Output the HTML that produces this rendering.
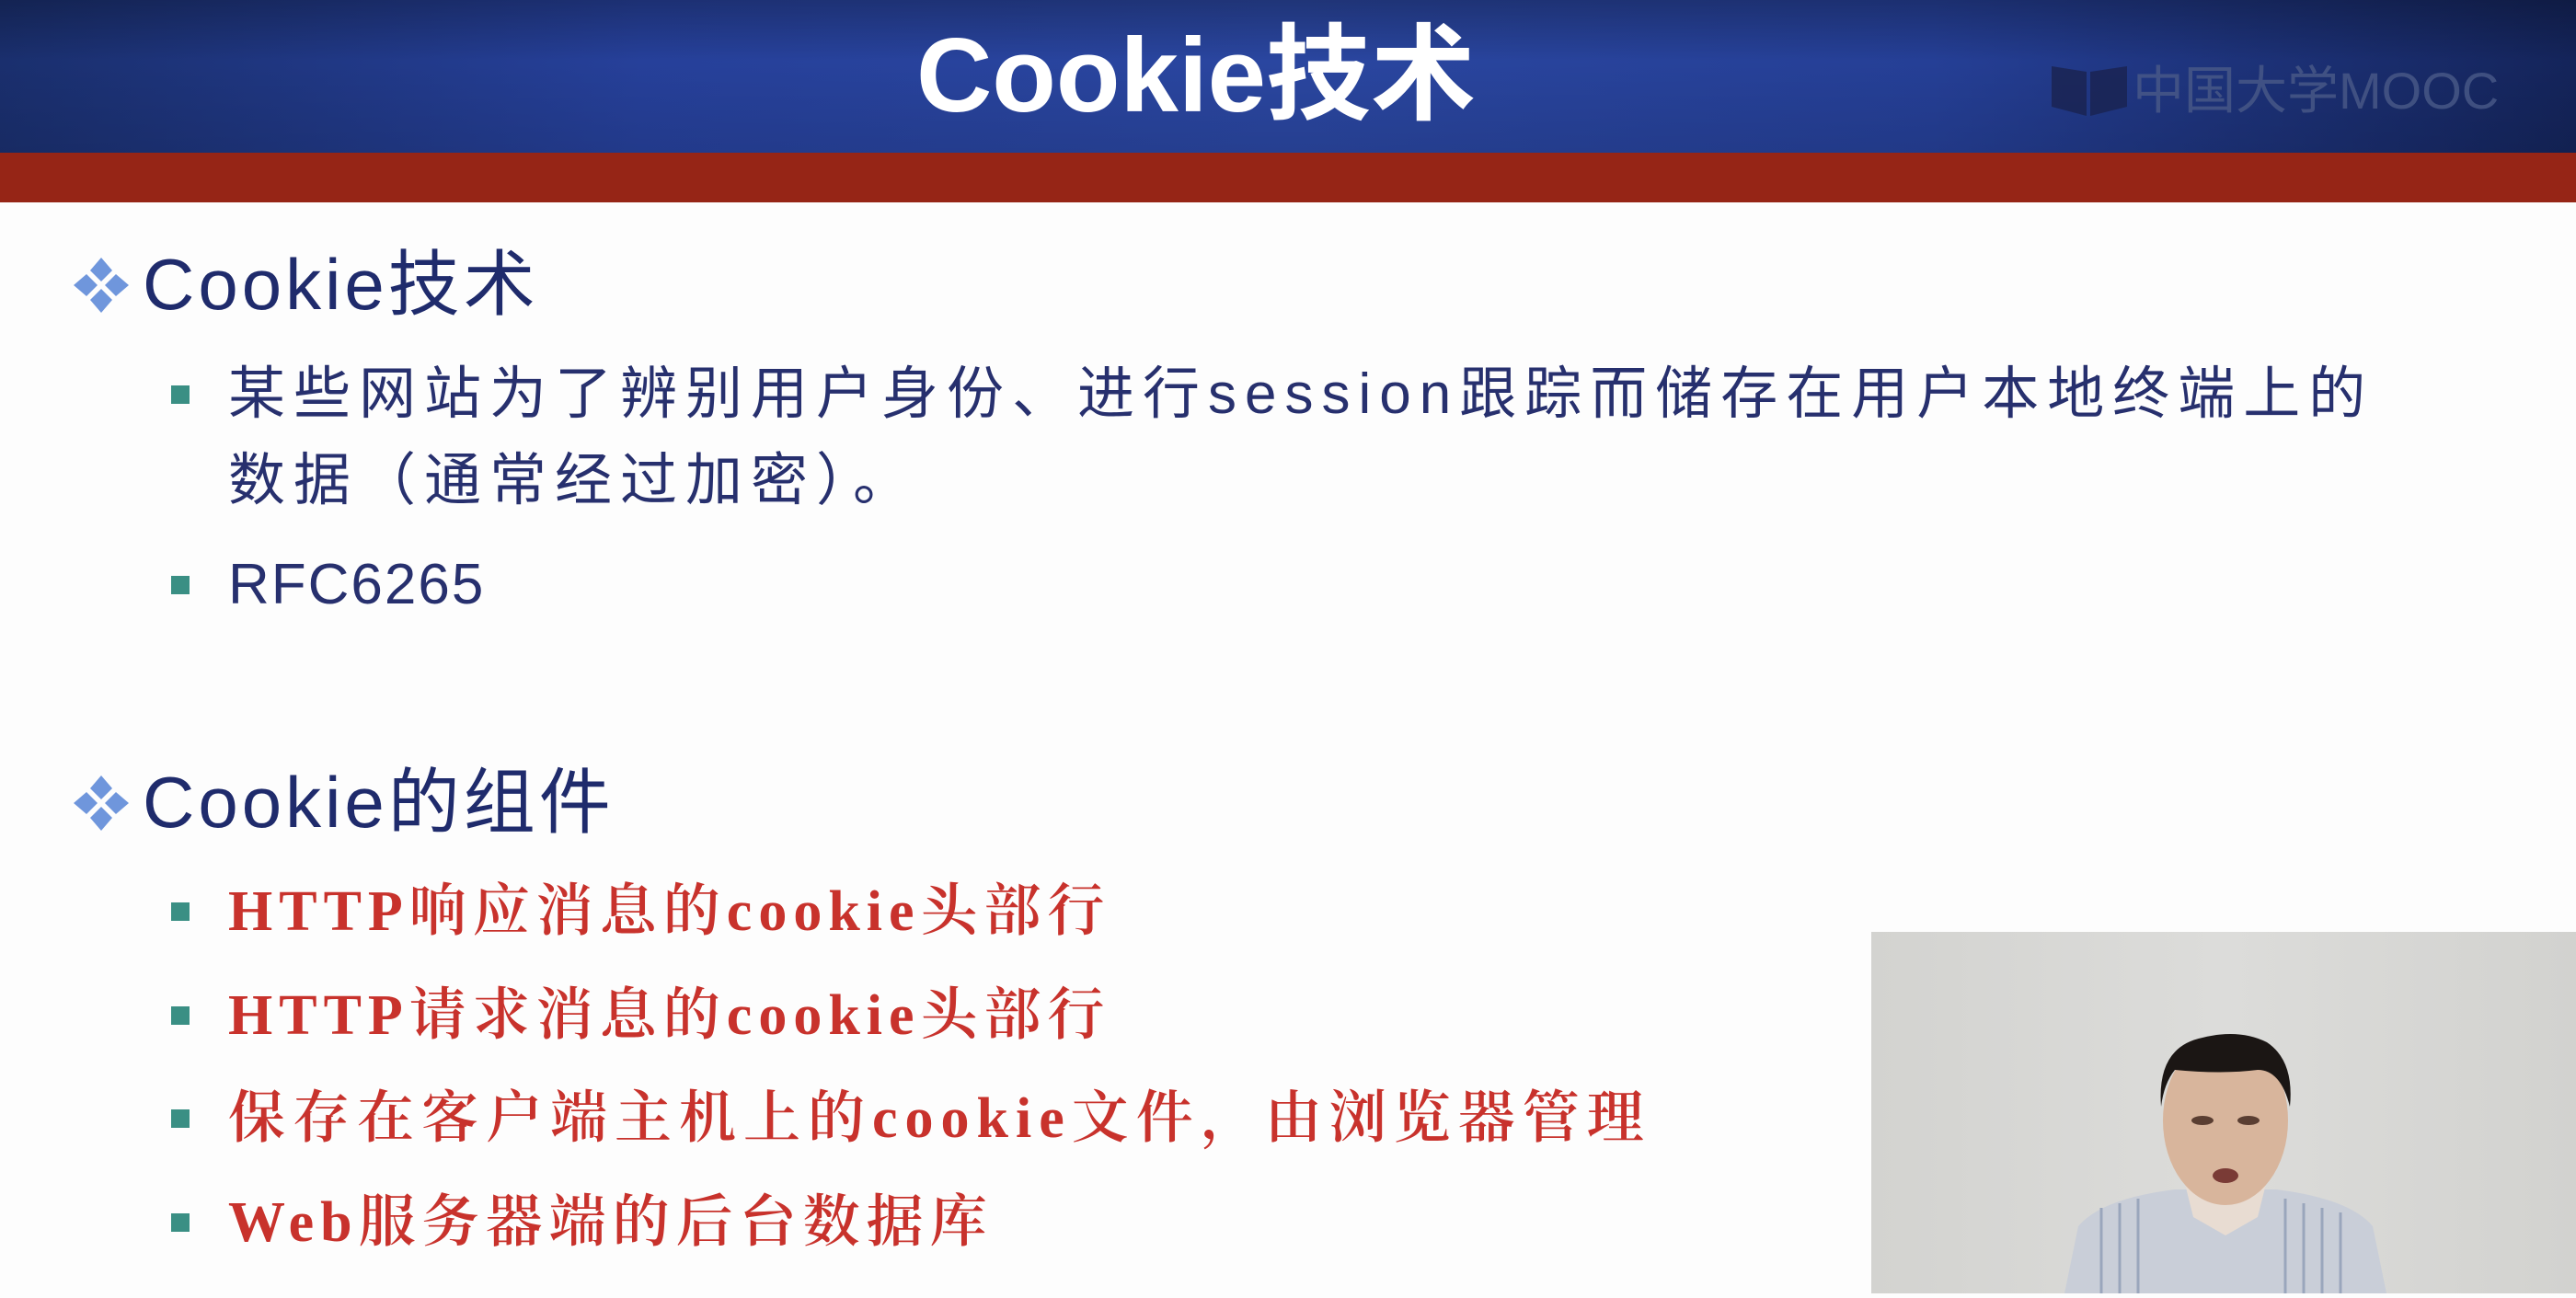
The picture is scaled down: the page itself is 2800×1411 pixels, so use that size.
<!DOCTYPE html>
<html><head><meta charset="utf-8"><style>
*{margin:0;padding:0;box-sizing:border-box}
body{width:2800px;height:1406px;position:relative;overflow:hidden;background:#fdfdfd;font-family:"Liberation Sans","Noto Sans CJK SC",sans-serif}
.hdr{position:absolute;left:0;top:0;width:2800px;height:166px;background:linear-gradient(90deg,#1a2f6e 0%,#26409a 25%,#2a46a0 50%,#253f96 75%,#14245a 100%)}
.hdr:after{content:"";position:absolute;left:0;top:0;right:0;bottom:0;background:linear-gradient(180deg,rgba(0,0,0,.25),rgba(0,0,0,0) 40%,rgba(0,0,0,.1))}
.red{position:absolute;left:0;top:166px;width:2800px;height:54px;background:#962516}
.title{position:absolute;left:0;width:2600px;text-align:center;top:18px;font-size:114px;font-weight:bold;color:#fff;line-height:130px;z-index:2}
.logo{position:absolute;left:2228px;top:64px;height:70px;z-index:2;color:#4a5a88;font-size:56px;line-height:70px;opacity:.8}
.t{position:absolute;white-space:nowrap}
.l1{font-size:78px;color:#1f2b6c;left:155px;line-height:90px;letter-spacing:4px}
.l2{font-size:62px;color:#27306e;left:248px;line-height:80px;letter-spacing:9px}
.r{font-family:"Liberation Serif","Noto Serif CJK SC",serif;font-size:62px;color:#c8322c;left:248px;line-height:80px;letter-spacing:7px;font-weight:600}
.sq{position:absolute;left:186px;width:20px;height:20px;background:#3a8f84}
.dm{position:absolute;left:78px;width:64px;height:64px}
.video{position:absolute;left:2034px;top:1013px;width:766px;height:393px;background:linear-gradient(90deg,#d3d3d0,#dcdcda 50%,#d2d2cf)}
</style></head><body>
<div class="hdr"></div><div class="red"></div>
<div class="title">Cookie技术</div>
<div class="logo"><svg width="90" height="70" style="vertical-align:top"><path d="M2 8 L40 14 L40 62 L2 52Z M44 14 L84 8 L84 52 L44 62Z" fill="#1a2350"/></svg>中国大学MOOC</div>

<svg class="dm" style="top:278px" viewBox="0 0 64 64"><g fill="#6f96dc"><path d="M32 2 L44 16 L32 28 L20 16Z"/><path d="M32 36 L44 48 L32 62 L20 48Z"/><path d="M2 32 L16 20 L28 32 L16 44Z"/><path d="M36 32 L48 20 L62 32 L48 44Z"/></g></svg>
<div class="t l1" style="top:264px">Cookie技术</div>
<div class="sq" style="top:419px"></div>
<div class="t l2" style="top:389px">某些网站为了辨别用户身份、进行session跟踪而储存在用户本地终端上的</div>
<div class="t l2" style="top:483px">数据（通常经过加密）。</div>
<div class="sq" style="top:626px"></div>
<div class="t l2" style="top:596px;letter-spacing:2px">RFC6265</div>

<svg class="dm" style="top:841px" viewBox="0 0 64 64"><g fill="#6f96dc"><path d="M32 2 L44 16 L32 28 L20 16Z"/><path d="M32 36 L44 48 L32 62 L20 48Z"/><path d="M2 32 L16 20 L28 32 L16 44Z"/><path d="M36 32 L48 20 L62 32 L48 44Z"/></g></svg>
<div class="t l1" style="top:827px">Cookie的组件</div>
<div class="sq" style="top:981px"></div>
<div class="t r" style="top:951px">HTTP响应消息的cookie头部行</div>
<div class="sq" style="top:1094px"></div>
<div class="t r" style="top:1064px">HTTP请求消息的cookie头部行</div>
<div class="sq" style="top:1206px"></div>
<div class="t r" style="top:1176px;letter-spacing:8px">保存在客户端主机上的cookie文件，由浏览器管理</div>
<div class="sq" style="top:1319px"></div>
<div class="t r" style="top:1289px">Web服务器端的后台数据库</div>

<div class="video">
<svg width="766" height="393" viewBox="0 0 766 393">
<path d="M210 393 L225 320 Q250 290 330 280 L440 280 Q520 290 545 320 L560 393Z" fill="#c9ced8"/>
<g stroke="#9aa6bc" stroke-width="3"><path d="M250 300 V393 M270 295 V393 M290 290 V393 M450 290 V393 M470 295 V393 M490 300 V393 M510 305 V393"/></g>
<path d="M340 270 L430 270 L420 310 L385 330 L350 310Z" fill="#e8dcd2"/>
<ellipse cx="385" cy="205" rx="68" ry="92" fill="#d8b59c"/>
<path d="M315 190 Q310 125 360 115 Q400 105 430 120 Q460 140 455 190 Q445 150 420 150 Q380 155 330 150 Q318 165 315 190Z" fill="#1b1614"/>
<ellipse cx="360" cy="205" rx="12" ry="5" fill="#5a3e32"/><ellipse cx="410" cy="205" rx="12" ry="5" fill="#5a3e32"/>
<ellipse cx="385" cy="265" rx="14" ry="8" fill="#7a3b36"/>
</svg>
</div>
</body></html>
